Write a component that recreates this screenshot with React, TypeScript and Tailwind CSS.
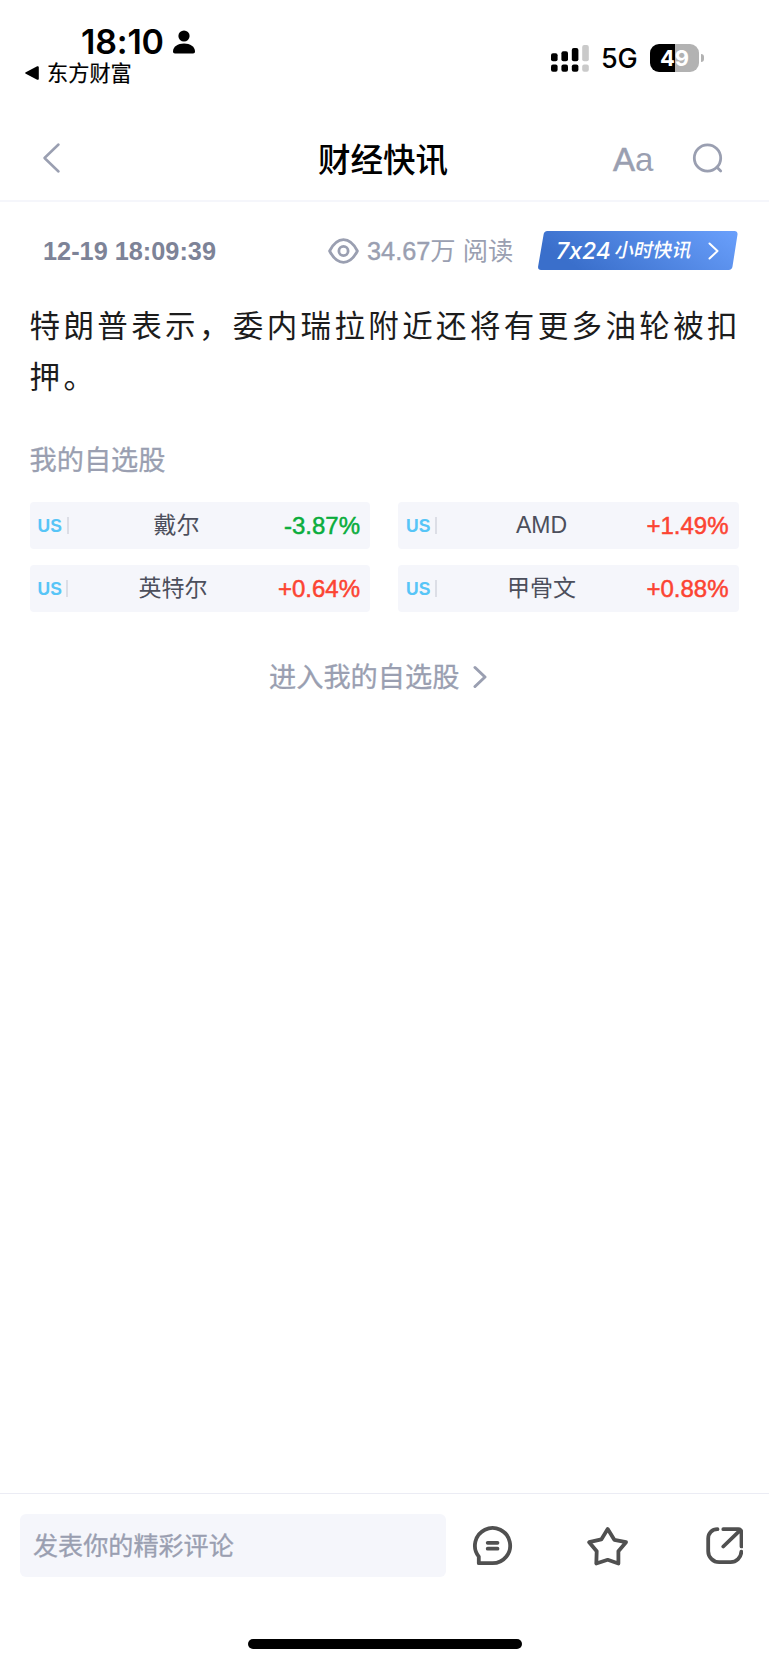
import type { ReactNode } from 'react';

type Stock = { name: string; change: string; up: boolean };

const STOCKS: Stock[] = [
  { name: '戴尔', change: '-3.87%', up: false },
  { name: 'AMD', change: '+1.49%', up: true },
  { name: '英特尔', change: '+0.64%', up: true },
  { name: '甲骨文', change: '+0.88%', up: true },
];

// ---------------------------------------------------------------------------
// Icons
// ---------------------------------------------------------------------------

function PersonIcon() {
  return (
    <svg className="h-6 w-[22px]" viewBox="0 0 22 24" fill="currentColor" aria-hidden>
      <circle cx="11" cy="6" r="5.6" />
      <path d="M0 21.3C0 17 4.8 13.6 11 13.6S22 17 22 21.3c0 1.5-.7 2.2-2 2.2H2c-1.3 0-2-.7-2-2.2z" />
    </svg>
  );
}

function SignalIcon() {
  return (
    <svg className="h-[27px] w-[38px]" viewBox="0 0 38 27" fill="currentColor" aria-hidden>
      <rect x="0" y="8.2" width="6.6" height="8" rx="2" />
      <rect x="10.4" y="6.2" width="6.6" height="10" rx="2" />
      <rect x="20.8" y="3" width="6.6" height="13.2" rx="2" />
      <rect x="0" y="19.4" width="6.6" height="7.4" rx="2" />
      <rect x="10.4" y="19.4" width="6.6" height="7.4" rx="2" />
      <rect x="20.8" y="19.4" width="6.6" height="7.4" rx="2" />
      <g fill="#cacaca">
        <rect x="31.2" y="0" width="6.6" height="16.2" rx="2" />
        <rect x="31.2" y="19.4" width="6.6" height="7.4" rx="2" />
      </g>
    </svg>
  );
}

function Chevron({ className, d, box, width }: { className: string; d: string; box: string; width: number }) {
  return (
    <svg
      className={className}
      viewBox={box}
      fill="none"
      stroke="currentColor"
      strokeWidth={width}
      strokeLinecap="round"
      strokeLinejoin="round"
      aria-hidden
    >
      <path d={d} />
    </svg>
  );
}

function SearchIcon() {
  return (
    <svg
      className="h-8 w-8"
      viewBox="0 0 32 32"
      fill="none"
      stroke="currentColor"
      strokeWidth="2.8"
      strokeLinecap="round"
      aria-hidden
    >
      <circle cx="15.5" cy="16" r="13.2" />
      <path d="M25 25.2l3.7 3.7" />
    </svg>
  );
}

function EyeIcon() {
  return (
    <svg className="h-[26px] w-[31px]" viewBox="0 0 31 26" fill="none" stroke="currentColor" strokeWidth="2.8" aria-hidden>
      <path
        d="M1.6 13C5.2 6 9.8 1.7 15.5 1.7S25.8 6 29.4 13c-3.6 7-8.2 11.3-13.9 11.3S5.2 20 1.6 13z"
        strokeLinejoin="round"
      />
      <circle cx="15.5" cy="13" r="4.6" />
    </svg>
  );
}

function ToolIcon({ children }: { children: ReactNode }) {
  return (
    <svg
      className="h-[42px] w-[42px]"
      viewBox="0 0 42 42"
      fill="none"
      stroke="currentColor"
      strokeWidth="3.8"
      strokeLinecap="round"
      strokeLinejoin="round"
      aria-hidden
    >
      {children}
    </svg>
  );
}

// ---------------------------------------------------------------------------
// Bars
// ---------------------------------------------------------------------------

function StatusBar() {
  return (
    <div className="flex h-[120px] shrink-0 justify-between pr-[65px] pl-[25px] text-black">
      <div className="pt-[26px]">
        <div className="flex h-8 items-center pl-[56px]">
          <span className="w-[92px] font-['Inter',sans-serif] text-[34px] leading-8 font-semibold tracking-[-0.2px]">
            18:10
          </span>
          <PersonIcon />
        </div>
        <div className="flex h-[30px] items-center gap-[8px]">
          <svg className="h-[14px] w-[14px]" viewBox="0 0 14 14" fill="currentColor" aria-hidden>
            <path d="M.8 6.2L12.2.3c.9-.4 1.6 0 1.6.9v11.6c0 .9-.7 1.3-1.6.9L.8 7.8c-.8-.4-.8-1.2 0-1.6z" />
          </svg>
          <span className="-mt-[3px] text-[21.2px] leading-[30px] [-webkit-text-stroke:0.2px]">东方财富</span>
        </div>
      </div>
      <div className="mt-[44px] flex h-7 items-center">
        <SignalIcon />
        <span className="mt-[2px] ml-[12px] w-[49px] font-['Inter',sans-serif] text-[27px] leading-7 font-medium tracking-[-0.3px]">
          5G
        </span>
        <div className="flex h-[28px] w-[49px] items-center justify-center rounded-[9px] bg-linear-to-r from-black from-50% to-[#b2b2b2] to-50% font-['Inter',sans-serif] text-[22px] leading-7 font-bold text-white">
          49
        </div>
        <div className="ml-[2px] h-2 w-[3px] rounded-r-full bg-[#b2b2b2]" />
      </div>
    </div>
  );
}

function NavBar() {
  return (
    <header className="flex h-[82px] shrink-0 items-center border-b-2 border-[#f5f6fb] pr-[43px] pb-[4px] pl-[42px] text-[#9a9fb1]">
      <div className="w-[276px]">
        <Chevron className="h-8 w-[19px]" box="0 0 19 32" d="M16.5 2.5L2.5 16l14 13.5" width={2.5} />
      </div>
      <h1 className="w-[295px] text-[32.5px] leading-10 font-medium text-black">财经快讯</h1>
      <span className="mt-[3px] w-[79px] font-['Liberation_Sans',sans-serif] text-[33px] leading-10">
        <span className="[-webkit-text-stroke:0.6px]">A</span>a
      </span>
      <SearchIcon />
    </header>
  );
}

function NewsBadge() {
  return (
    <div className="relative flex h-[39px] w-[200px] items-center pl-[18px] text-white">
      <svg className="absolute inset-0 h-full w-full" viewBox="0 0 200 39" aria-hidden>
        <defs>
          <linearGradient id="badge" x1="0" y1="0.3" x2="1" y2="0">
            <stop offset="0" stopColor="#3a6fcb" />
            <stop offset="1" stopColor="#6aa0fc" />
          </linearGradient>
        </defs>
        <path
          fill="url(#badge)"
          d="M9.4 0H196.5c2 0 3.3 1.6 3 3.5L194.5 35.6c-.3 2-1.7 3.4-3.8 3.4H3c-2 0-3.2-1.5-2.9-3.4L5.6 3.4C5.9 1.4 7.3 0 9.4 0z"
        />
      </svg>
      <span className="relative w-[59px] font-['Inter',sans-serif] text-[23px] leading-10 font-medium italic [font-feature-settings:'calt'_0]">
        7x24
      </span>
      <span className="relative w-[93px] -skew-x-12 text-[19.2px] leading-10 font-medium">小时快讯</span>
      <Chevron className="relative h-[18px] w-[11px]" box="0 0 11 18" d="M1.5 1.5L9.5 9l-8 7.5" width={2} />
    </div>
  );
}

// ---------------------------------------------------------------------------
// Watchlist
// ---------------------------------------------------------------------------

function StockCard({ stock }: { stock: Stock }) {
  return (
    <div className="flex h-[47px] items-center rounded bg-[#f5f6fb] pr-[10px] pl-[8px] font-['Liberation_Sans','Noto_Sans_CJK_SC',sans-serif]">
      <span className="mt-[1px] w-[30px] text-[17.5px] font-bold text-[#57c5f7]">US</span>
      <span className="h-[17px] w-[2px] bg-[#dcdee6]" />
      <span className="-mt-px w-[218px] text-center text-[23px] leading-8 text-[#4c4f5c]">{stock.name}</span>
      <span
        className={[
          'flex flex-1 justify-end text-[24px] leading-8 whitespace-nowrap [-webkit-text-stroke:0.5px]',
          stock.up ? 'text-[#fc4432]' : 'text-[#0aad3c]',
        ].join(' ')}
      >
        {stock.change}
      </span>
    </div>
  );
}

export default function App() {
  return (
    <div className="flex h-[1665px] w-[769px] flex-col overflow-hidden bg-white font-['Noto_Sans_CJK_SC',sans-serif]">
      <StatusBar />
      <NavBar />

      <main className="flex-1 pr-[30.5px] pl-[29.5px]">
        <div className="mt-[29px] -mr-[1px] flex h-[39px] items-center pl-[13.5px] font-['Liberation_Sans','Noto_Sans_CJK_SC',sans-serif] text-[#9a9fb1]">
          <time className="mt-[2px] w-[285px] text-[25.3px] font-bold text-[#7d8397]">12-19 18:09:39</time>
          <EyeIcon />
          <span className="ml-[8px] w-[171px] text-[25.3px] leading-10 whitespace-nowrap">
            <span className="[-webkit-text-stroke:0.4px]">34.67</span>万 阅读
          </span>
          <NewsBadge />
        </div>

        <p className="mt-[29px] -mr-4 text-[30.5px] leading-[51px] tracking-[3.38px] text-[#1c1c1c]">
          特朗普表示，委内瑞拉附近还将有更多油轮被扣押。
        </p>

        <h2 className="mt-[37px] text-[27.2px] leading-10 text-[#9a9fb1] [-webkit-text-stroke:0.3px]">我的自选股</h2>

        <div className="mt-[24px] grid grid-cols-2 gap-x-[28px] gap-y-[16px]">
          {STOCKS.map((stock) => (
            <StockCard key={stock.name} stock={stock} />
          ))}
        </div>

        <a className="mt-[43px] flex items-center pl-[239.5px] text-[27.2px] leading-10 text-[#9a9fb1] [-webkit-text-stroke:0.3px]">
          进入我的自选股
          <Chevron className="mt-[3px] ml-[14px] h-6 w-[14px]" box="0 0 14 24" d="M2 2.5L12 12 2 21.5" width={3} />
        </a>
      </main>

      <footer className="flex h-[172px] shrink-0 flex-col border-t border-[#ebecf4]">
        <div className="mt-[20px] flex h-[63px] items-center pl-[20px] text-[#505050]">
          <div className="flex h-full w-[426px] items-center rounded-md bg-[#f5f6fb] pb-[3px] pl-[13px] text-[25.1px] leading-10 text-[#9a9fb1] [-webkit-text-stroke:0.3px]">
            发表你的精彩评论
          </div>
          <div className="ml-[25px] flex gap-[73px]">
            <ToolIcon>
              <path d="M7.8 38.2v-6.6A17.6 17.6 0 1 1 21.3 38.2z" />
              <path d="M16.7 17.8h9.8M16.7 23.7h9.8" />
            </ToolIcon>
            <ToolIcon>
              <path d="M21.7 4L28.3 14.8 40 17.2 32.4 26.2V38.5L21.7 34.8 10.3 38.5 10.7 26.2 3.2 17.2 15.3 14.4z" />
            </ToolIcon>
            <ToolIcon>
              <path d="M16.5 4.2C11 4.2 7.2 8 7.2 13.5V26A11 11 0 0 0 18.2 37.2h11.3a10.8 10.8 0 0 0 10.8-10.500" />
              <path d="M22.3 4.200h15a3.200 3.200 0 0 1 3.200 3.200v14M39.300 5.200L22.300 21.500" />
            </ToolIcon>
          </div>
        </div>
        <div className="mt-[62px] h-[10px] w-[274px] self-center rounded-full bg-black" />
      </footer>
    </div>
  );
}
